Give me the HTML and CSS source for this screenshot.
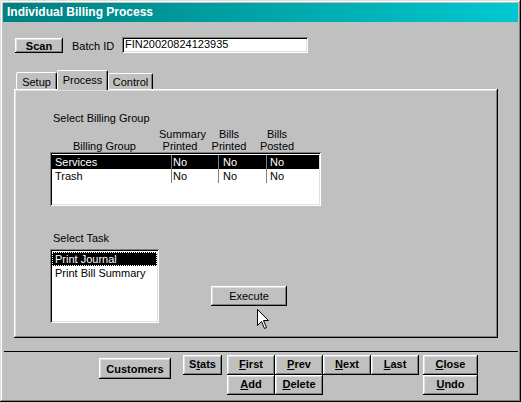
FILE: index.html
```html
<!DOCTYPE html>
<html>
<head>
<meta charset="utf-8">
<title>Individual Billing Process</title>
<link rel="stylesheet" href="styles.css">
</head>
<body>
<div class="window">
  <div class="titlebar">Individual Billing Process</div>

  <div class="toprow">
    <div class="btn btn-scan">Scan</div>
    <div class="batch-label">Batch ID</div>
    <div class="textbox">FIN20020824123935</div>
  </div>

  <div class="tabs">
    <div class="tab tab-setup">Setup</div>
    <div class="tab tab-active">Process</div>
    <div class="tab tab-control">Control</div>
  </div>

  <div class="panel">
    <div class="section-label">Select Billing Group</div>
    <div class="grid-head">
      <div>Billing Group</div>
      <div>Summary<br>Printed</div>
      <div>Bills<br>Printed</div>
      <div>Bills<br>Posted</div>
    </div>
    <div class="listbox billing">
      <div class="row selected">
        <span class="c c1">Services</span><span class="c c2">No</span><span class="c c3">No</span><span class="c c4">No</span>
      </div>
      <div class="row">
        <span class="c c1">Trash</span><span class="c c2">No</span><span class="c c3">No</span><span class="c c4">No</span>
      </div>
    </div>

    <div class="section-label task-label">Select Task</div>
    <div class="task-row">
      <div class="listbox tasks">
        <div class="trow selected focus">Print Journal</div>
        <div class="trow">Print Bill Summary</div>
      </div>
      <div class="btn btn-exec">Execute</div>
    </div>
  </div>

  <div class="divider"></div>

  <div class="bottom">
    <div class="btn btn-bold btn-cust">Customers</div>
    <div class="btn btn-bold btn-nav btn-stats">S<u>t</u>ats</div>
    <div class="nav">
      <div class="btn btn-bold btn-nav"><u>F</u>irst</div>
      <div class="btn btn-bold btn-nav"><u>P</u>rev</div>
      <div class="btn btn-bold btn-nav"><u>N</u>ext</div>
      <div class="btn btn-bold btn-nav"><u>L</u>ast</div>
      <div class="btn btn-bold btn-nav"><u>A</u>dd</div>
      <div class="btn btn-bold btn-nav"><u>D</u>elete</div>
    </div>
    <div class="closecol">
      <div class="btn btn-bold btn-nav"><u>C</u>lose</div>
      <div class="btn btn-bold btn-nav"><u>U</u>ndo</div>
    </div>
  </div>

  <svg class="cursor" width="12" height="20" viewBox="0 0 12 20">
    <path d="M0.5 0.5 L0.5 16.5 L4.5 12.5 L7.5 19.5 L9.5 18.5 L6.5 11.5 L11.5 11.5 Z" fill="#fff" stroke="#000" stroke-width="1"/>
  </svg>
</div>
</body>
</html>
```

FILE: styles.css
```css
* { box-sizing: border-box; }
html, body { margin: 0; padding: 0; }
body {
  background: #c0c0c0;
  font-family: "Liberation Sans", Arial, sans-serif;
  font-size: 11px;
  color: #000;
}

.window {
  position: relative;
  width: 521px;
  height: 402px;
  padding: 3px;
  background: #c0c0c0;
  display: flex;
  flex-direction: column;
  box-shadow: inset -1px -1px #000, inset 1px 1px #dfdfdf,
              inset -2px -2px #808080, inset 2px 2px #fff;
}

.titlebar {
  height: 19px;
  padding-left: 4px;
  background: linear-gradient(to right, #008080, #00c8d0);
  color: #fff;
  font-weight: bold;
  font-size: 12px;
  line-height: 19px;
  white-space: nowrap;
}

.btn {
  display: flex;
  align-items: center;
  justify-content: center;
  background: #c0c0c0;
  line-height: 12px;
  white-space: nowrap;
  box-shadow: inset -1px -1px #000, inset 1px 1px #fff,
              inset -2px -2px #808080, inset 2px 2px #dfdfdf;
}
.btn u { text-underline-offset: 1px; }

.toprow {
  display: flex;
  align-items: flex-end;
  height: 16px;
  margin-top: 15px;
  margin-left: 12px;
}
.btn-scan {
  width: 48px;
  height: 15px;
  font-weight: bold;
}
.batch-label {
  width: 59px;
  padding-left: 9px;
  line-height: 12px;
  padding-bottom: 1px;
  white-space: nowrap;
}
.textbox {
  width: 186px;
  height: 16px;
  padding: 1px 3px 0 3px;
  line-height: 12px;
  background: #fff;
  white-space: nowrap;
  box-shadow: inset 1px 1px #808080, inset -1px -1px #fff,
              inset 2px 2px #000, inset -2px -2px #dfdfdf;
}

.tabs {
  display: flex;
  align-items: flex-end;
  height: 19px;
  margin-top: 17px;
  margin-left: 13px;
}
.tab {
  text-align: center;
  line-height: 13px;
  background: #c0c0c0;
  border-top: 1px solid #fff;
  border-left: 1px solid #fff;
  border-right: 1px solid #000;
  border-radius: 2px 2px 0 0;
  box-shadow: inset -1px 0 #808080;
}
.tab-setup {
  width: 41px;
  height: 17px;
  padding-top: 3px;
}
.tab-active {
  position: relative;
  z-index: 1;
  width: 51px;
  height: 20px;
  margin-bottom: -1px;
  padding-top: 3px;
}
.tab-control {
  width: 45px;
  height: 16px;
  padding-top: 2px;
}

.panel {
  width: 484px;
  height: 249px;
  margin-left: 11px;
  padding: 23px 0 0 36px;
  box-shadow: inset -1px -1px #000, inset 1px 1px #fff,
              inset -2px -2px #808080, inset 2px 2px #dfdfdf;
}
.section-label {
  margin-left: 3px;
  line-height: 13px;
}
.grid-head {
  display: grid;
  grid-template-columns: 109px 42px 56px 40px;
  align-items: end;
  text-align: center;
  line-height: 12px;
  margin-top: 3px;
}

.listbox {
  background: #fff;
  padding: 3px 2px 0 2px;
  box-shadow: inset 1px 1px #808080, inset -1px -1px #fff,
              inset 2px 2px #000, inset -2px -2px #dfdfdf;
}
.billing {
  width: 271px;
  height: 54px;
}
.row {
  display: flex;
  height: 14px;
  line-height: 14px;
}
.row.selected { background: #000; color: #fff; }
.c { display: block; white-space: nowrap; }
.c1 { width: 119px; padding-left: 3px; }
.c2 { width: 47px; padding-left: 1px; border-left: 1px solid #808080; }
.c3 { width: 48px; padding-left: 4px; border-left: 1px solid #808080; }
.c4 { flex: 1; padding-left: 3px; border-left: 1px solid #808080; }

.task-label { margin-top: 26px; }
.task-row {
  display: flex;
  align-items: flex-start;
  margin-top: 4px;
}
.tasks {
  width: 109px;
  height: 74px;
}
.trow {
  height: 14px;
  line-height: 14px;
  padding-left: 3px;
  white-space: nowrap;
}
.trow.selected { background: #000; color: #fff; }
.trow.focus { outline: 1px dotted #fff; outline-offset: -1px; }
.btn-exec {
  width: 76px;
  height: 20px;
  margin-left: 52px;
  margin-top: 37px;
}

.divider {
  height: 1px;
  margin-top: 13px;
  margin-left: 1px;
  background: #000;
}

.bottom {
  display: flex;
  align-items: flex-start;
  margin-top: 3px;
  margin-left: 96px;
}
.btn-bold { font-weight: bold; }
.btn-nav { height: 20px; padding-bottom: 2px; }
.btn-cust {
  width: 72px;
  height: 21px;
  margin-top: 3px;
}
.btn-stats {
  width: 39px;
  margin-left: 12px;
}
.nav {
  display: grid;
  grid-template-columns: repeat(4, 48px);
  grid-auto-rows: 20px;
  margin-left: 5px;
}
.closecol {
  display: grid;
  grid-template-columns: 55px;
  grid-auto-rows: 20px;
  margin-left: 4px;
}

.cursor {
  position: absolute;
  left: 257px;
  top: 309px;
}
```
